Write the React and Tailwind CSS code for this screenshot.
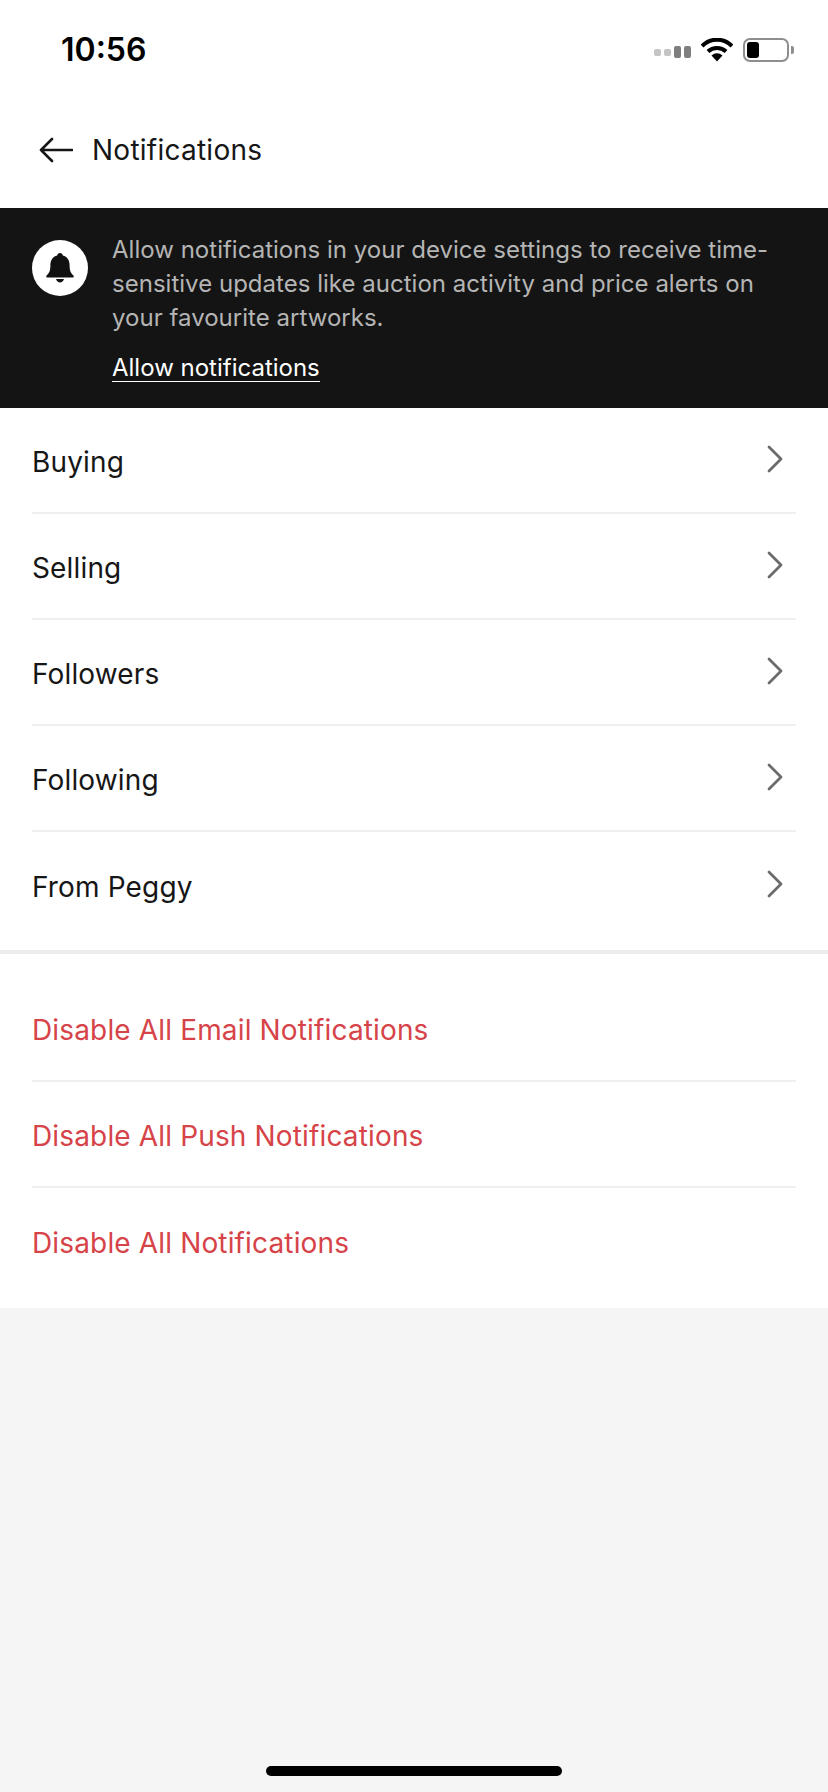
import React from 'react';

const font = { fontFamily: 'Inter, sans-serif' };

const menuRows = ['Buying', 'Selling', 'Followers', 'Following', 'From Peggy'];
const dangerRows = ['Disable All Email Notifications', 'Disable All Push Notifications', 'Disable All Notifications'];

function StatusIcons() {
  return (
    <div className="flex items-center">
      <div className="flex items-center gap-[3px] mr-[10px] mt-[4px]">
        <span className="w-[7px] h-[7px] rounded-[2px] bg-[#c4c4c4]" />
        <span className="w-[7px] h-[7px] rounded-[2px] bg-[#c4c4c4]" />
        <span className="w-[7px] h-[12px] rounded-[2px] bg-[#7f7f7f]" />
        <span className="w-[7px] h-[12px] rounded-[2px] bg-[#7f7f7f]" />
      </div>
      <svg width="32" height="24" viewBox="0 0 32 24" className="mr-[10px]">
        <path d="M1 8 A21 21 0 0 1 31 8" fill="none" stroke="#000" strokeWidth="4" />
        <path d="M7 13.5 A13 13 0 0 1 25 13.5" fill="none" stroke="#000" strokeWidth="4" />
        <path d="M10.5 17.5 L16 23.5 L21.5 17.5 A8 8 0 0 0 10.5 17.5 Z" fill="#000" />
      </svg>
      <div className="flex items-center">
        <div className="w-[46px] h-[24px] rounded-[7px] border-2 border-[#8e8e8e] p-[2px] flex">
          <div className="w-[12px] h-full rounded-[3px] bg-black" />
        </div>
        <span className="w-[3px] h-[8px] ml-[2px] rounded-r-[2px] bg-[#8e8e8e]" />
      </div>
    </div>
  );
}

function Chevron() {
  return (
    <svg width="18" height="28" viewBox="0 0 18 28" fill="none" className="mr-[12px] -mt-[2px]">
      <path d="M3 2 L15 14 L3 26" stroke="#6b6b6b" strokeWidth="2.8" strokeLinecap="round" strokeLinejoin="round" />
    </svg>
  );
}

export default function App() {
  return (
    <div className="w-[828px] h-[1792px] bg-[#f5f5f5] flex flex-col relative" style={font}>
      <div className="bg-white h-[208px] flex flex-col">
        <div className="h-[100px] pl-[61px] pr-[34px] flex items-center justify-between">
          <span className="text-[32px] font-semibold text-black leading-none">10:56</span>
          <StatusIcons />
        </div>
        <div className="flex items-center pl-[39px] pt-[33px]">
          <svg width="34" height="26" viewBox="0 0 34 26" fill="none">
            <path d="M33 13 H2 M13 2 L2 13 L13 24" stroke="#161616" strokeWidth="2.6" strokeLinecap="round" strokeLinejoin="round" />
          </svg>
          <span className="ml-[19px] text-[28px] tracking-[0.25px] leading-[34px] text-[#161616]">Notifications</span>
        </div>
      </div>

      <div className="bg-[#141414] h-[200px] pl-[32px] pr-[40px] pt-[25px] flex items-start">
        <div className="w-[56px] h-[56px] mt-[7px] rounded-full bg-white flex items-center justify-center shrink-0">
          <svg width="28" height="30" viewBox="0 0 28 30" fill="#111">
            <path d="M14 0 C15.6 0 16.6 1 16.8 2.6 C21.4 3.8 23.6 7.4 23.6 12 C23.6 17.5 24.6 20 27.4 22.6 C28 23.2 27.8 24.4 26.8 24.4 H1.2 C0.2 24.4 0 23.2 0.6 22.6 C3.4 20 4.4 17.5 4.4 12 C4.4 7.4 6.6 3.8 11.2 2.6 C11.4 1 12.4 0 14 0 Z" />
            <path d="M10 26 H18 C17.4 28.4 15.8 29.4 14 29.4 C12.2 29.4 10.6 28.4 10 26 Z" />
          </svg>
        </div>
        <div className="ml-[24px]">
          <p className="text-[24px] tracking-[0.02px] leading-[34px] text-[#b5b5b5] w-[660px]">
            Allow notifications in your device settings to receive time-sensitive updates like auction activity and price alerts on your favourite artworks.
          </p>
          <a className="inline-block mt-[19px] text-[24px] leading-[27px] text-white border-b-[1.5px] border-white">Allow notifications</a>
        </div>
      </div>

      <div className="bg-white border-b-4 border-[#ececec] h-[546px] px-[32px]">
        {menuRows.map((label, i) => (
          <div
            key={label}
            className={`h-[106px] flex items-center justify-between text-[28px] tracking-[0.15px] text-[#161616] ${i < menuRows.length - 1 ? 'border-b-2 border-[#efefef]' : ''}`}
          >
            <span className="mt-[4px]">{label}</span>
            <Chevron />
          </div>
        ))}
      </div>

      <div className="bg-white h-[354px] px-[32px] pt-[22px]">
        {dangerRows.map((label, i) => (
          <div
            key={label}
            className={`h-[106px] flex items-center text-[28px] tracking-[0.15px] text-[#d64348] ${i < dangerRows.length - 1 ? 'border-b-2 border-[#efefef]' : ''}`}
          >
            <span className="mt-[4px]">{label}</span>
          </div>
        ))}
      </div>

      <div className="absolute left-[266px] top-[1766px] w-[296px] h-[10px] rounded-full bg-black" />
    </div>
  );
}
